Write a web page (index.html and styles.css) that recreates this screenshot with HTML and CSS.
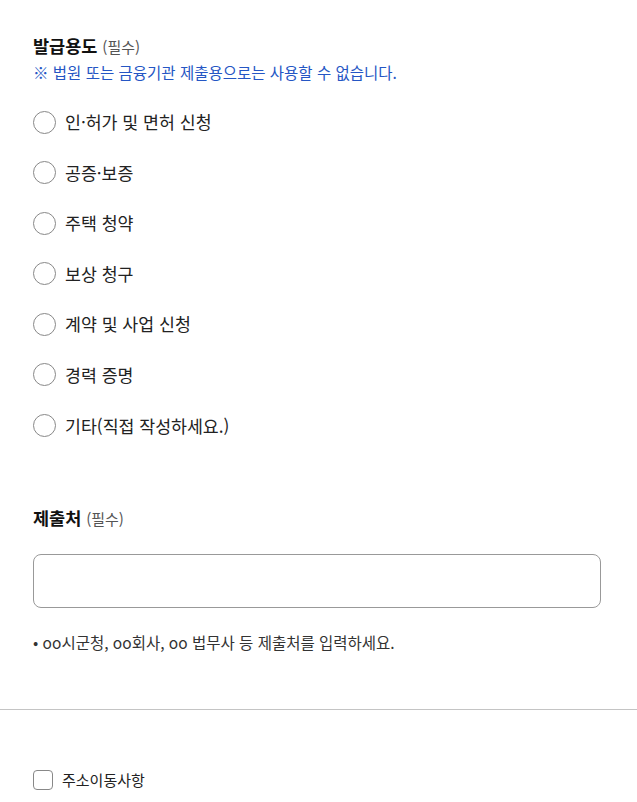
FILE: index.html
```html
<!DOCTYPE html>
<html lang="ko">
<head>
    <meta charset="UTF-8">
    <meta name="viewport" content="width=device-width, initial-scale=1.0">
    <title>발급용도</title>
    <link rel="stylesheet" href="styles.css">
</head>
<body>
    <section class="section">
        <h3 class="label">발급용도 <span class="req">(필수)</span></h3>
        <p class="notice">※ 법원 또는 금융기관 제출용으로는 사용할 수 없습니다.</p>

        <ul class="radio-list">
            <li><label class="radio"><input type="radio" name="purpose"><span class="mark"></span>인·허가 및 면허 신청</label></li>
            <li><label class="radio"><input type="radio" name="purpose"><span class="mark"></span>공증·보증</label></li>
            <li><label class="radio"><input type="radio" name="purpose"><span class="mark"></span>주택 청약</label></li>
            <li><label class="radio"><input type="radio" name="purpose"><span class="mark"></span>보상 청구</label></li>
            <li><label class="radio"><input type="radio" name="purpose"><span class="mark"></span>계약 및 사업 신청</label></li>
            <li><label class="radio"><input type="radio" name="purpose"><span class="mark"></span>경력 증명</label></li>
            <li><label class="radio"><input type="radio" name="purpose"><span class="mark"></span>기타(직접 작성하세요.)</label></li>
        </ul>
    </section>

    <section class="section submit">
        <h3 class="label">제출처 <span class="req">(필수)</span></h3>
        <input type="text" class="text-input">
        <p class="hint">• oo시군청, oo회사, oo 법무사 등 제출처를 입력하세요.</p>
    </section>

    <hr class="divider">

    <label class="check"><input type="checkbox"><span class="box"></span>주소이동사항</label>
</body>
</html>
```

FILE: styles.css
```css
body {
    margin: 0;
    font-family: "Noto Sans CJK KR", "Noto Sans", sans-serif;
    color: #222;
    background: #fff;
}

.section {
    padding: 0 36px 0 33px;
}

.label {
    margin: 35px 0 0;
    font-size: 17.5px;
    font-weight: 700;
    line-height: 22px;
    color: #111;
}

.req {
    font-size: 15px;
    font-weight: 400;
    color: #555;
}

.notice {
    margin: 4px 0 0;
    font-size: 15.5px;
    line-height: 20px;
    color: #2556c4;
}

.radio-list {
    list-style: none;
    margin: 28px 0 0;
    padding: 0;
}

.radio-list li {
    height: 50.6px;
}

.radio {
    display: flex;
    align-items: center;
    gap: 9px;
    font-size: 17.3px;
    line-height: 24px;
    color: #222;
}

.radio input,
.check input {
    display: none;
}

.mark {
    width: 21px;
    height: 21px;
    border: 1px solid #888;
    border-radius: 50%;
}

.submit .label {
    margin-top: 43px;
}

.text-input {
    display: block;
    box-sizing: border-box;
    width: 100%;
    height: 54px;
    margin-top: 24px;
    border: 1px solid #999;
    border-radius: 8px;
}

.hint {
    margin: 24px 0 0;
    font-size: 15.5px;
    line-height: 20px;
    color: #333;
}

.divider {
    margin: 57px 0 0;
    border: none;
    border-top: 1px solid #c4c4c4;
}

.check {
    display: flex;
    align-items: center;
    gap: 9px;
    margin: 60px 0 0 33px;
    font-size: 15px;
    line-height: 20px;
    color: #222;
}

.box {
    width: 18px;
    height: 18px;
    border: 1px solid #888;
    border-radius: 4px;
}
```
